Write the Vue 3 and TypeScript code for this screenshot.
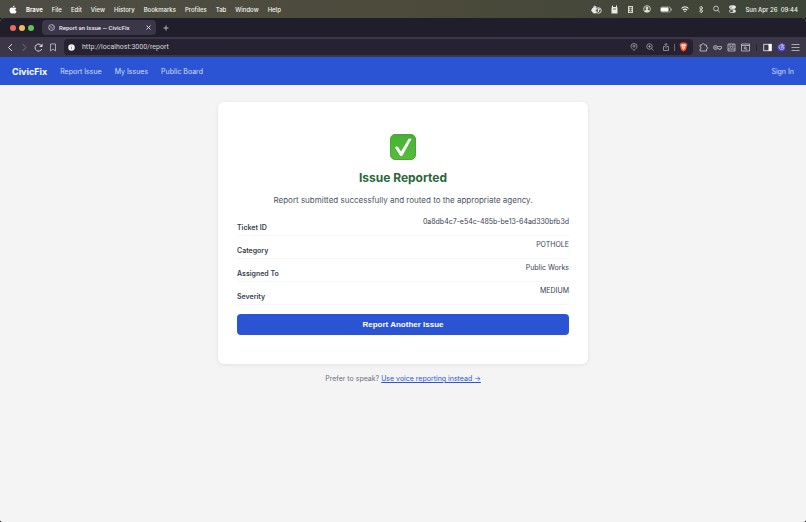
<script setup lang="ts">
interface Detail {
  label: string
  value: string
}

const menus: string[] = ['File', 'Edit', 'View', 'History', 'Bookmarks', 'Profiles', 'Tab', 'Window', 'Help']

const details: Detail[] = [
  { label: 'Ticket ID', value: '0a8db4c7-e54c-485b-be13-64ad330bfb3d' },
  { label: 'Category', value: 'POTHOLE' },
  { label: 'Assigned To', value: 'Public Works' },
  { label: 'Severity', value: 'MEDIUM' },
]
</script>

<template>
  <div class="desktop">
    <div class="menubar">
      <svg class="apple" width="8" height="9" viewBox="0 0 16 18" fill="#fff">
        <path d="M11 1c0 2-1.400 3.500-3.200 3.600C7.700 2.800 9.200 1.200 11 1zM8.200 5.700c.8 0 1.800-.9 3.200-.9 1.200 0 2.400.6 3.100 1.700-2.700 1.500-2.300 5.300.6 6.400-.7 2-2.100 4.100-3.600 4.100-1.200 0-1.600-.7-3-.7s-1.900.7-3 .7C3.500 17 1 13.300 1 9.800c0-3.100 2-4.900 4.100-4.900 1.400 0 2.400.8 3.100.8z" />
      </svg>
      <strong class="app-name">Brave</strong>
      <span v-for="m in menus" :key="m">{{ m }}</span>
      <div class="status">
        <svg width="11" height="9" viewBox="0 0 22 18" fill="none" stroke="#e9ebe4" stroke-width="1.800">
          <path d="M10 5 4 6 1 11l4 5h5z" fill="#e9ebe4" />
          <path d="M6 7V2l5 2" />
          <circle cx="15" cy="11" r="5.500" fill="#4a4e3d" />
          <path d="M13 8h4l-3 6M15 8v6" />
        </svg>
        <svg width="7" height="9" viewBox="0 0 14 18" fill="#e9ebe4">
          <path d="M2 1h2v3h6V1h2v4h1v12H1V5h1z" />
          <path d="M4 8h6" stroke="#4a4e3d" stroke-width="1.500" />
        </svg>
        <svg width="7" height="9" viewBox="0 0 14 18">
          <rect x="2" y="2" width="10" height="14" fill="#d5d8ce" />
          <path d="M4 5h6M4 13h6" stroke="#4a4e3d" stroke-width="1.500" />
          <circle cx="7" cy="9" r="2.300" fill="#4a4e3d" />
        </svg>
        <svg width="8" height="8" viewBox="0 0 16 16" fill="none" stroke="#e9ebe4" stroke-width="1.500">
          <circle cx="8" cy="8" r="6.800" />
          <circle cx="8" cy="6" r="2.200" fill="#e9ebe4" />
          <path d="M4 13c0-5 8-5 8 0z" fill="#e9ebe4" />
        </svg>
        <svg width="12" height="7" viewBox="0 0 24 14">
          <rect x="1" y="2" width="20" height="10" rx="3" fill="none" stroke="#b9bbb0" stroke-width="1.400" />
          <rect x="2" y="3" width="15" height="8" rx="2" fill="#fff" />
          <path d="M23 5v4" stroke="#b9bbb0" stroke-width="1.500" />
        </svg>
        <svg width="8" height="7" viewBox="0 0 16 14" fill="none" stroke="#f2f3ee" stroke-width="2.200">
          <path d="M1 5c4-4.500 10-4.500 14 0M3.800 8.200c2.500-2.500 6-2.500 8.400 0" />
          <path d="m5.800 10.200 2.200 2.300 2.200-2.300q-2.200-1.800-4.400 0z" fill="#f2f3ee" stroke="none" />
        </svg>
        <svg width="6" height="9" viewBox="0 0 12 18" fill="none" stroke="#e9ebe4" stroke-width="1.500">
          <path d="m2 5 8 7-4 4V2l4 4-8 7" />
        </svg>
        <svg width="7" height="8" viewBox="0 0 14 16" fill="none" stroke="#e9ebe4" stroke-width="1.500">
          <circle cx="6" cy="7" r="4.800" />
          <path d="m9.500 10.500 4 4.500" />
        </svg>
        <svg width="7" height="8" viewBox="0 0 14 16" fill="none" stroke="#e9ebe4" stroke-width="1.500">
          <rect x="1" y="1.500" width="12" height="5.500" rx="2.700" fill="#e9ebe4" />
          <circle cx="4" cy="4.200" r="1.200" fill="#4a4e3d" stroke="none" />
          <rect x="1" y="9.500" width="12" height="5.500" rx="2.700" />
          <circle cx="10" cy="12.200" r="2" fill="#e9ebe4" />
        </svg>
        <span class="clock">Sun Apr 26&nbsp; 09:44</span>
      </div>
    </div>

    <div class="window">
      <div class="tabstrip">
        <i class="light red"></i>
        <i class="light yellow"></i>
        <i class="light green"></i>
        <div class="tab">
          <svg width="7" height="7" viewBox="0 0 14 14" fill="none" stroke="#c4c1cc" stroke-width="1.300">
            <circle cx="7" cy="7" r="6" />
            <path d="M2 4c3 0 5 0 5 2s-2 2-3 2-2 1-1 3M9 1c-1 3 1 3 4 4M13 8c-3-1-5 0-5 2s1 2 1 3" />
          </svg>
          <span class="tab-title">Report an Issue — CivicFix</span>
          <button class="icon-btn" aria-label="Close tab">
            <svg width="5" height="5" viewBox="0 0 10 10" stroke="#e4e2e9" stroke-width="1.800"><path d="m1 1 8 8M9 1 1 9" /></svg>
          </button>
        </div>
        <button class="icon-btn" aria-label="New tab">
          <svg width="6" height="6" viewBox="0 0 12 12" stroke="#d5d2dc" stroke-width="1.600"><path d="M6 1v10M1 6h10" /></svg>
        </button>
      </div>

      <div class="toolbar">
        <div class="history">
          <button class="icon-btn" aria-label="Back">
            <svg width="8" height="9" viewBox="0 0 16 18" fill="none" stroke="#dcd9e2" stroke-width="2"><path d="m12 2-7 7 7 7" /></svg>
          </button>
          <button class="icon-btn" aria-label="Forward">
            <svg width="8" height="9" viewBox="0 0 16 18" fill="none" stroke="#77727f" stroke-width="2"><path d="m5 2 7 7-7 7" /></svg>
          </button>
          <button class="icon-btn" aria-label="Reload">
            <svg width="9" height="9" viewBox="0 0 18 18" fill="none" stroke="#d5d2dc" stroke-width="2"><path d="M15.500 12A7 7 0 1 1 15 5.500" /><path d="M17 1v7h-7z" fill="#d5d2dc" stroke="none" /></svg>
          </button>
          <button class="icon-btn" aria-label="Bookmark">
            <svg width="8" height="9" viewBox="0 0 16 18" fill="none" stroke="#c4c1cc" stroke-width="1.600"><path d="M3 2h10v14l-5-4-5 4z" /></svg>
          </button>
        </div>
        <div class="address">
          <svg width="7" height="7" viewBox="0 0 14 14"><circle cx="7" cy="7" r="6.500" fill="#f1f0f4" /><path d="M7 6v4M7 3.500v1" stroke="#777" stroke-width="1.400" /></svg>
          <input class="url" aria-label="Address" value="http://localhost:3000/report" />
          <div class="address-icons">
            <svg width="8" height="8" viewBox="0 0 16 16" fill="none" stroke="#b7b3c0" stroke-width="1.400"><path d="M8 15C5 12 2 10 2 6.500a6 5.500 0 0 1 12 0C14 10 11 12 8 15z" /><circle cx="8" cy="6.500" r="2" /></svg>
            <svg width="8" height="8" viewBox="0 0 16 16" fill="none" stroke="#b7b3c0" stroke-width="1.400"><circle cx="7" cy="7" r="5.500" /><path d="m11 11 4 4M4.500 7h5M7 4.500v5" /></svg>
            <svg width="8" height="8" viewBox="0 0 16 16" fill="none" stroke="#b7b3c0" stroke-width="1.400"><path d="M6 7H3v8h10V7h-3M8 11V1M5 4l3-3 3 3" /></svg>
          </div>
          <i class="rule"></i>
          <svg width="9" height="10" viewBox="0 0 18 20">
            <path d="M5 1h8l2 2 2 1-1 4-2 8-5 3-5-3-2-8-1-4 2-1z" fill="#ef5a2f" />
            <path d="m9 5 3-1 2 3-2 3v2l-3 3-3-3v-2L4 7l2-3z" fill="#fbe4dc" />
            <path d="m6 8 2 1M12 8l-2 1M9 8v3" stroke="#ef5a2f" stroke-width="1" />
          </svg>
        </div>
        <div class="extensions">
          <svg width="9" height="9" viewBox="0 0 18 18" fill="none" stroke="#d0cdd7" stroke-width="1.600"><path d="M2 4h4c0-4 5-4 5 0h4v4c3 0 3 4 0 4v4H2v-4c3 0 3-4 0-4z" /></svg>
          <svg width="9" height="9" viewBox="0 0 18 18" fill="none" stroke="#c4c1cc" stroke-width="1.600"><circle cx="5" cy="9" r="4" /><circle cx="5" cy="9" r="1.200" /><path d="M9 7h8v4h-2v2h-3v-2H9" /></svg>
          <svg width="9" height="9" viewBox="0 0 18 18" fill="none" stroke="#d0cdd7" stroke-width="1.500"><path d="M2 2h14v14H2zM2 12h14M6 2v7l3-2 3 2V2" /></svg>
          <svg width="9" height="9" viewBox="0 0 18 18" fill="none" stroke="#d0cdd7" stroke-width="1.500"><path d="M1 2h16v14H1zM1 5h16" /><circle cx="8.500" cy="10" r="2.200" /><path d="m10 11.500 2.500 2.500" /></svg>
        </div>
        <i class="rule dark"></i>
        <div class="extensions end">
          <svg width="9" height="9" viewBox="0 0 18 18"><rect x="1.500" y="2.500" width="15" height="13" fill="none" stroke="#efedf3" stroke-width="1.600" /><path d="M11 2h6v14h-6z" fill="#fff" /></svg>
          <svg width="9" height="9" viewBox="0 0 18 18" fill="none"><circle cx="9" cy="9" r="8" fill="#4d3fd0" /><path d="M10 4C6 3 4 6 4 9c1 5 9 6 10 1 0-4-6-4-6-1 0 2 3 2 3 0M10 1l1 4 4-1" stroke="#dedcff" stroke-width="1.700" /></svg>
          <button class="icon-btn" aria-label="Menu">
            <svg width="9" height="9" viewBox="0 0 18 18" stroke="#c9c6d1" stroke-width="1.600"><path d="M1 3h16M1 9h16M1 15h16" /></svg>
          </button>
        </div>
      </div>

      <div class="page">
        <nav class="nav">
          <a class="brand" href="#">CivicFix</a>
          <a href="#">Report Issue</a>
          <a href="#">My Issues</a>
          <a href="#">Public Board</a>
          <a class="signin" href="#">Sign In</a>
        </nav>
        <main>
          <section class="card">
            <svg class="check" width="26" height="26" viewBox="0 0 52 52">
              <defs>
                <linearGradient id="tile" x1="0" y1="0" x2="0" y2="1">
                  <stop offset="0" stop-color="#4aa838" />
                  <stop offset="0.150" stop-color="#48b536" />
                  <stop offset="1" stop-color="#56bd38" />
                </linearGradient>
              </defs>
              <rect x="1" y="1" width="50" height="50" rx="9" fill="url(#tile)" stroke="#4da53a" stroke-width="2" />
              <path d="M10 27q3-3 6-1l6 9L37 10q3-2 6 0L25 43q-3 2-5 0z" fill="#fff" />
            </svg>
            <h1>Issue Reported</h1>
            <p class="message">Report submitted successfully and routed to the appropriate agency.</p>
            <dl>
              <div v-for="d in details" :key="d.label" class="row">
                <dt>{{ d.label }}</dt>
                <dd>{{ d.value }}</dd>
              </div>
            </dl>
            <button class="primary">Report Another Issue</button>
          </section>
          <p class="voice">Prefer to speak? <a href="#">Use voice reporting instead →</a></p>
        </main>
      </div>
    </div>
  </div>
</template>

<style>
body {
  margin: 0;
  background: #000;
}
</style>

<style scoped>
* {
  box-sizing: border-box;
}
.desktop {
  display: flex;
  flex-direction: column;
  min-height: 100vh;
  font-family: Inter, "Liberation Sans", sans-serif;
  background: #000;
}
svg {
  display: block;
  flex: none;
}
.icon-btn {
  display: block;
  padding: 0;
  border: 0;
  background: none;
}
.menubar {
  display: flex;
  align-items: center;
  gap: 9px;
  height: 18px;
  padding: 0 8px 0 9px;
  color: #f4f5f0;
  background: linear-gradient(90deg, #4d4d45, #4d4b3b 50%, #46483a 70%, #3d4438);
  font-size: 6px;
  font-weight: 500;
  white-space: nowrap;
}
.app-name {
  font-weight: 700;
}
.status {
  display: flex;
  align-items: center;
  gap: 9px;
  margin-left: auto;
}
.window {
  display: flex;
  flex: 1;
  flex-direction: column;
  overflow: hidden;
  border-radius: 4px 4px 3px 3px;
  background: #f4f4f4;
}
.tabstrip {
  display: flex;
  align-items: center;
  height: 19px;
  padding-left: 10px;
  background: #211e2c;
}
.light {
  width: 6px;
  height: 6px;
  margin-right: 3px;
  border-radius: 50%;
}
.red {
  background: #ee6a5f;
}
.yellow {
  background: #f5bd4f;
}
.green {
  background: #61c454;
}
.tab {
  display: flex;
  align-items: center;
  gap: 4px;
  width: 114px;
  height: 15px;
  margin: 0 7px 0 5px;
  padding: 0 5px 0 6px;
  border-radius: 4px;
  color: #eceaf0;
  background: #3b3648;
  font-family: Roboto, "Liberation Sans", sans-serif;
  font-size: 6px;
  font-weight: 500;
}
.tab-title {
  flex: 1;
  white-space: nowrap;
}
.toolbar {
  display: flex;
  align-items: center;
  height: 20px;
  padding: 0 6px;
  background: #3b3648;
}
.history {
  display: flex;
  gap: 6px;
  margin-right: 7px;
}
.address {
  display: flex;
  flex: 1;
  align-items: center;
  height: 16px;
  padding: 0 5px 0 4px;
  border-radius: 4px;
  background: #272231;
}
.url {
  flex: 1;
  min-width: 0;
  margin-left: 7px;
  padding: 0;
  border: 0;
  outline: 0;
  color: #d8d5de;
  background: none;
  font: 7px Roboto, "Liberation Sans", sans-serif;
}
.address-icons {
  display: flex;
  gap: 8px;
}
.rule {
  width: 1px;
  height: 7px;
  margin: 0 4px;
  background: #6d6877;
}
.rule.dark {
  margin: 0 6px;
  background: #25212d;
}
.extensions {
  display: flex;
  gap: 5px;
  margin-left: 6px;
}
.extensions.end {
  margin-left: 0;
}
.page {
  flex: 1;
  background: #f4f4f4;
}
.nav {
  display: flex;
  align-items: center;
  gap: 13px;
  height: 28px;
  padding: 0 12px;
  background: #2b54d4;
  font-size: 7px;
}
.nav a {
  color: #d5dffa;
  text-decoration: none;
}
.nav .brand {
  color: #fff;
  font-size: 9px;
  font-weight: 700;
}
.nav .signin {
  margin-left: auto;
}
main {
  max-width: 370px;
  margin: 17px auto 0;
}
.card {
  display: flex;
  flex-direction: column;
  padding: 32px 19px 29px;
  border-radius: 6px;
  background: #fff;
  box-shadow: 0 1px 4px rgba(0, 0, 0, 0.08);
}
.check {
  align-self: center;
}
h1 {
  margin: 10px 0 0;
  color: #2a6639;
  font-size: 12px;
  font-weight: 700;
  line-height: 16px;
  text-align: center;
}
.message {
  margin: 8px 0 0;
  color: #4b5563;
  font-size: 8px;
  line-height: 12px;
  text-align: center;
}
dl {
  margin: 7px 0 9px;
}
.row {
  display: flex;
  justify-content: space-between;
  height: 23px;
  padding: 4px 0 2px;
  border-bottom: 1px solid #f7f7f9;
  color: #374151;
  font-size: 7px;
  line-height: 10px;
}
dt {
  align-self: flex-end;
  font-weight: 600;
}
dd {
  margin: 0;
}
.primary {
  height: 21px;
  padding: 0;
  border: 0;
  border-radius: 4px;
  color: #fff;
  background: #2b54d4;
  font: 700 8px "Liberation Sans", sans-serif;
}
.voice {
  margin: 10px 0 0;
  color: #6b7280;
  font-size: 7px;
  line-height: 10px;
  text-align: center;
}
.voice a {
  color: #2b54d4;
}
</style>
